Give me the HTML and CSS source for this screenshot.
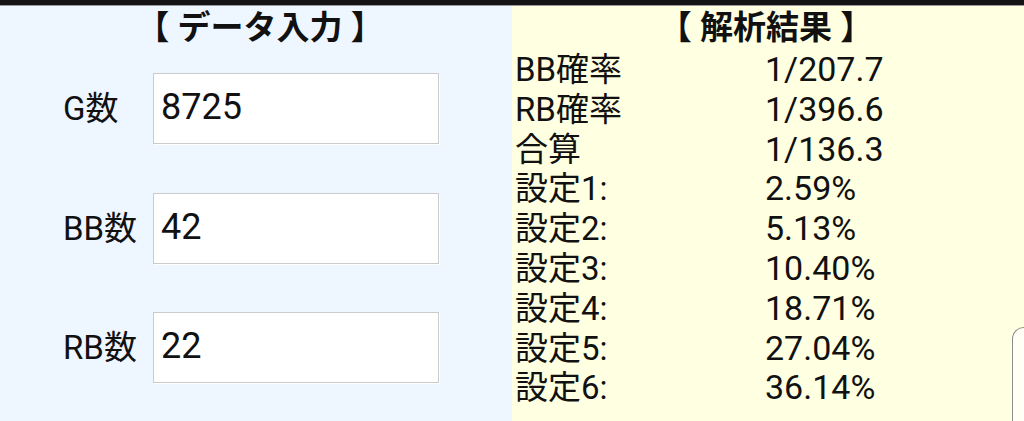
FILE: index.html
```html
<!DOCTYPE html>
<html lang="ja">
<head>
<meta charset="utf-8">
<link rel="stylesheet" href="styles.css">
</head>
<body>
<div class="topbar"></div>
<main class="app">
  <section class="panel input-panel">
    <h2 class="heading">【 データ入力 】</h2>
    <div class="form">
      <label class="label">G数</label>
      <div class="field">8725</div>
      <label class="label">BB数</label>
      <div class="field">42</div>
      <label class="label">RB数</label>
      <div class="field">22</div>
    </div>
  </section>
  <section class="panel result-panel">
    <h2 class="heading">【 解析結果 】</h2>
    <div class="results">
      <span>BB確率</span><span class="value">1/207.7</span>
      <span>RB確率</span><span class="value">1/396.6</span>
      <span>合算</span><span class="value">1/136.3</span>
      <span>設定1:</span><span class="value">2.59%</span>
      <span>設定2:</span><span class="value">5.13%</span>
      <span>設定3:</span><span class="value">10.40%</span>
      <span>設定4:</span><span class="value">18.71%</span>
      <span>設定5:</span><span class="value">27.04%</span>
      <span>設定6:</span><span class="value">36.14%</span>
    </div>
  </section>
</main>
<div class="bubble"></div>
</body>
</html>
```

FILE: styles.css
```css
html, body {
  margin: 0;
  padding: 0;
  width: 1024px;
  height: 421px;
  overflow: hidden;
  font-family: Roboto, "Noto Sans CJK JP", sans-serif;
  color: #111;
}

.topbar {
  height: 5px;
  background: #141414;
  border-bottom: 1px solid #9a9a9a;
}

.app {
  display: flex;
  height: 415px;
}

.panel {
  width: 512px;
  box-sizing: border-box;
}

.input-panel {
  background: #eef6ff;
}

.result-panel {
  background: #ffffe2;
}

.heading {
  margin: 0;
  font-size: 33px;
  font-weight: bold;
  line-height: 44px;
  text-align: center;
  white-space: pre;
}

.input-panel .heading {
  padding-left: 8px;
}

.result-panel .heading {
  padding-right: 4px;
}

.form {
  display: grid;
  grid-template-columns: 90px 286px;
  grid-auto-rows: 71px;
  row-gap: 48.5px;
  padding-left: 63px;
  margin-top: 23px;
  align-items: center;
}

.label {
  font-size: 33px;
  line-height: 71px;
}

.field {
  height: 71px;
  box-sizing: border-box;
  background: #fff;
  border: 1.5px solid #cbcbcb;
  box-shadow: 1px 1px 0 #fff;
  font-size: 36px;
  line-height: 66px;
  padding-left: 7px;
}

.results {
  display: grid;
  grid-template-columns: 250px auto;
  padding-left: 3px;
  font-size: 33px;
  line-height: 39.8px;
}

.value {
  font-size: 34px;
}

.bubble {
  position: absolute;
  left: 1012px;
  top: 327px;
  width: 12px;
  height: 94px;
  box-sizing: border-box;
  border-left: 1.5px solid #8c8c8c;
  border-top: 1.5px solid #8c8c8c;
  border-top-left-radius: 16px;
  background: #fffff6;
}
```
